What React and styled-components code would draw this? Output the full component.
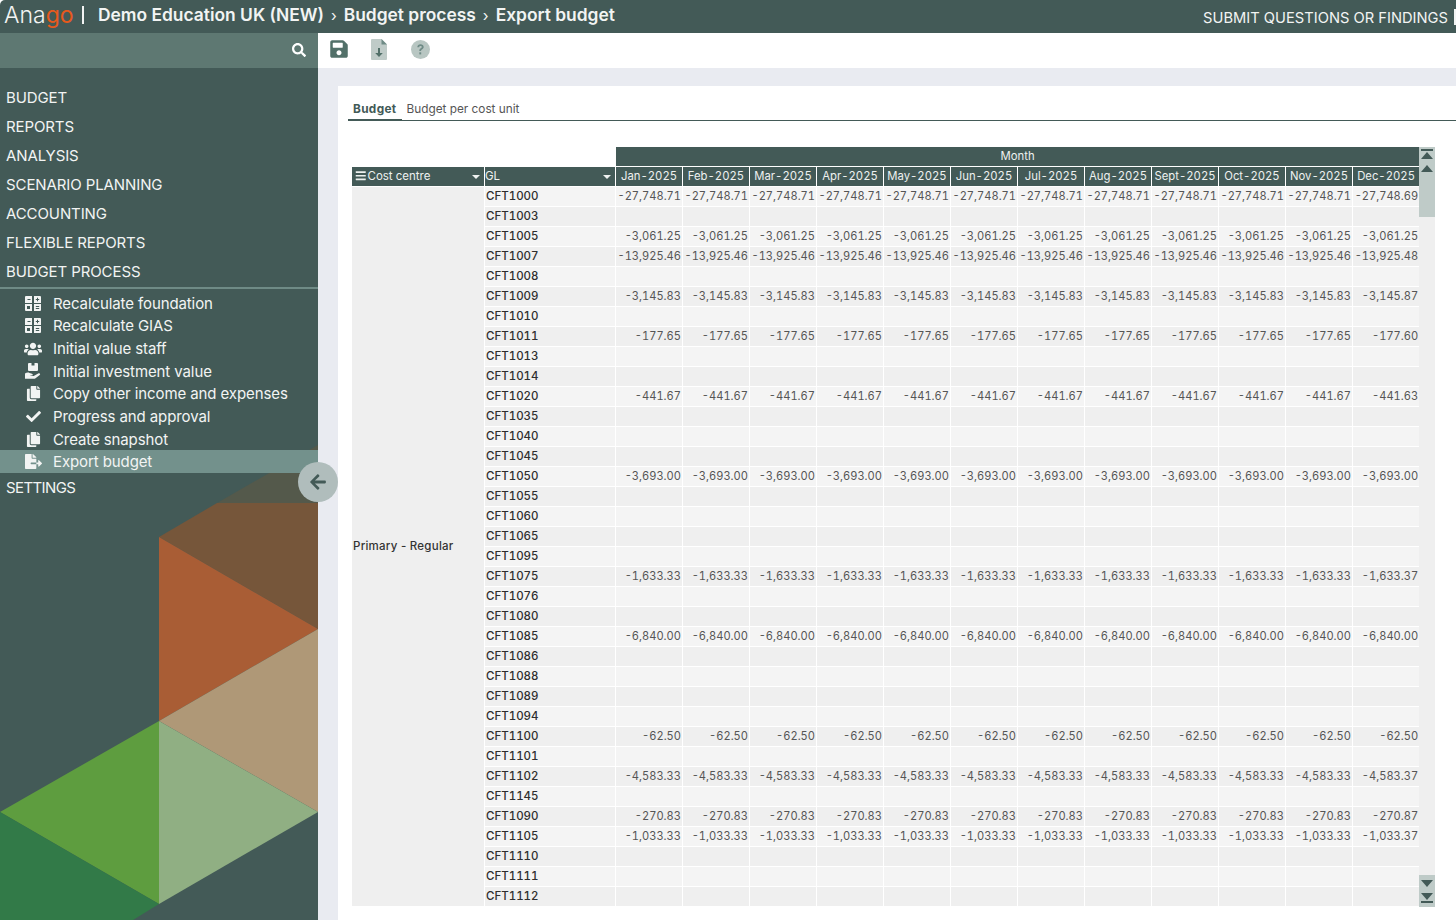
import React from 'react'
import styled, { createGlobalStyle } from 'styled-components'
import { FaSearch, FaSave, FaUsers, FaCopy, FaCheck, FaFileExport, FaArrowLeft, FaBars } from 'react-icons/fa'

const GlobalStyle = createGlobalStyle`
  html, body {
    margin: 0;
    padding: 0;
    height: 100%;
    overflow: hidden;
    background: #fff;
    font-family: 'Inter', 'Liberation Sans', sans-serif;
  }
`

const Page = styled.div`
  width: 1456px;
  height: 920px;
  display: flex;
  flex-direction: column;
  overflow: hidden;
`

const Header = styled.header`
  height: 33px;
  flex: none;
  display: flex;
  align-items: center;
  background: #435a57;
  color: #f2f4f3;
  padding-left: 4px;
  white-space: nowrap;
  border-top-left-radius: 5px;
`

const Logo = styled.span`
  font-size: 23px;
  font-weight: 300;
  width: 71px;
  padding-bottom: 4px;
`

const LogoAccent = styled.span`
  color: #e8591c;
  font-weight: 400;
`

const LogoBar = styled.span`
  width: 2px;
  height: 18px;
  background: #f2f4f3;
  margin: 0 14px 3px 7px;
`

const Crumb = styled.span`
  font-size: 17.4px;
  font-weight: 600;
  padding-bottom: 4px;
`

const CrumbSep = styled.span`
  font-size: 15px;
  margin: 0 7px;
  padding-bottom: 3px;
`

const Submit = styled.span`
  margin-left: auto;
  padding-top: 2px;
  font-size: 14.7px;
  font-weight: 400;
`

const SubmitBar = styled.span`
  width: 2px;
  height: 16px;
  margin-left: 6px;
  background: #f2f4f3;
`

const Body = styled.div`
  flex: 1;
  display: flex;
  min-height: 0;
`

const Sidebar = styled.aside`
  width: 318px;
  flex: none;
  position: relative;
  background: #435a57;
  color: #f2f4f3;
`

const Backdrop = styled.svg`
  position: absolute;
  left: 0;
  top: 0;
  width: 318px;
  height: 887px;
`

const SidebarContent = styled.div`
  position: relative;
`

const SearchRow = styled.div`
  height: 35px;
  display: flex;
  align-items: center;
  justify-content: flex-end;
  padding: 0 12px 2px 0;
  box-sizing: border-box;
  background: #5e7872;
  font-size: 14px;
  color: #fff;
`

const Menu = styled.nav`
  padding-top: 15px;
`

const MenuItem = styled.div`
  height: 29px;
  line-height: 29px;
  padding-left: 6px;
  font-size: 15px;
  letter-spacing: -0.1px;
`

const SettingsItem = styled(MenuItem)`
  letter-spacing: -0.6px;
`

const SubMenu = styled.div`
  border-top: 2px solid #6f8b86;
  margin-top: 1px;
  padding-top: 3px;
`

const SubItem = styled.div`
  height: 22.65px;
  display: flex;
  align-items: center;
  font-size: 15px;
  letter-spacing: -0.1px;
  background: ${(props) => (props.$active ? '#73918c' : 'transparent')};
`

const SubIcon = styled.span`
  width: 53px;
  flex: none;
  display: flex;
  align-items: center;
  justify-content: center;
  padding: 0 11px 0 24px;
  box-sizing: border-box;
  font-size: 15px;
`

const Collapse = styled.button`
  position: absolute;
  right: -20px;
  top: 429px;
  width: 40px;
  height: 40px;
  padding: 0;
  border: none;
  border-radius: 50%;
  background: #b0bdbc;
  color: #435a57;
  font-size: 18px;
  display: flex;
  align-items: center;
  justify-content: center;
`

const Main = styled.main`
  flex: 1;
  display: flex;
  flex-direction: column;
  min-width: 0;
  background: #e9ebf1;
`

const Toolbar = styled.div`
  height: 35px;
  flex: none;
  display: flex;
  align-items: center;
  background: #fff;
  padding-left: 11px;
`

const ToolButton = styled.span`
  width: 41px;
  height: 24px;
  margin-top: -3px;
  display: flex;
  align-items: center;
  font-size: 20px;
  color: #527069;
`

const FileButton = styled(ToolButton)`
  padding-left: 1px;
  width: 40px;
`

const Card = styled.section`
  flex: 1;
  margin-top: 18px;
  margin-left: 20px;
  background: #fff;
  padding: 13px 0 0 10px;
  min-height: 0;
`

const Tabs = styled.div`
  display: flex;
  align-items: stretch;
  height: 21px;
  border-bottom: 1px solid #435a57;
  font-size: 11.8px;
`

const Tab = styled.span`
  padding: 3px 5px 0;
  line-height: 14px;
  color: ${(props) => (props.$active ? '#435a57' : '#555')};
  font-weight: ${(props) => (props.$active ? 700 : 400)};
  letter-spacing: ${(props) => (props.$active ? '0.35px' : '0')};
  box-shadow: ${(props) => (props.$active ? 'inset 0 -2px 0 #435a57' : 'none')};
  margin-bottom: -1px;
`

const GridArea = styled.div`
  display: flex;
  margin: 26px 0 0 4px;
  height: 760px;
  overflow: hidden;
`

const TableClip = styled.div`
  width: 1067px;
  flex: none;
  overflow: hidden;
`

const Table = styled.table`
  width: 1068px;
  table-layout: fixed;
  border-collapse: separate;
  border-spacing: 0;
  font-size: 11.5px;
  font-variant-numeric: tabular-nums;
`

const HeadCell = styled.th`
  height: 18px;
  padding: 0 0 1px;
  border-right: 1px solid #fff;
  border-bottom: 1px solid #fff;
  background: ${(props) => (props.$blank ? '#fff' : '#435a57')};
  color: #eef1f0;
  font-weight: 400;
  font-size: 11.3px;
  text-align: center;
`

const FieldCell = styled(HeadCell)`
  text-align: left;
  position: relative;
  font-size: 11.5px;
`

const FieldInner = styled.span`
  display: flex;
  align-items: center;
  gap: 1px;
  padding-left: ${(props) => props.$indent || 0}px;
`

const Caret = styled.span`
  position: absolute;
  right: 4px;
  top: 8px;
  width: 0;
  height: 0;
  border-left: 4px solid transparent;
  border-right: 4px solid transparent;
  border-top: 4px solid #eef1f0;
`

const Cell = styled.td`
  height: 18px;
  padding: 0 1px 1px 0;
  border-right: 1px solid #fff;
  border-bottom: 1px solid #fff;
  background: ${(props) => (props.$odd ? '#efefef' : '#f4f4f4')};
  color: #555;
  font-size: 11.1px;
  text-align: right;
  white-space: nowrap;
  overflow: hidden;
`

const CodeCell = styled(Cell)`
  text-align: left;
  color: #2e2e2e;
  font-size: 11.5px;
  font-weight: 500;
  padding-left: 1px;
`

const CostCell = styled(Cell)`
  text-align: left;
  background: #efefef;
  color: #333;
  font-size: 11.5px;
  font-weight: 500;
  font-variant-numeric: normal;
  padding-left: 1px;
  letter-spacing: 0.25px;
`

const Scroller = styled.div`
  width: 16px;
  flex: none;
  display: flex;
  flex-direction: column;
  justify-content: space-between;
  background: #efefef;
`

const ScrollThumb = styled.div`
  height: ${(props) => props.$height}px;
  background: #bfcbc8;
  display: flex;
  flex-direction: column;
  align-items: center;
  padding-top: ${(props) => props.$pad}px;
  box-sizing: border-box;
`

const months = ['Jan-2025', 'Feb-2025', 'Mar-2025', 'Apr-2025', 'May-2025', 'Jun-2025', 'Jul-2025', 'Aug-2025', 'Sept-2025', 'Oct-2025', 'Nov-2025', 'Dec-2025']

const rows = [
  ['CFT1000', '-27,748.71', '-27,748.69'],
  ['CFT1003'],
  ['CFT1005', '-3,061.25', '-3,061.25'],
  ['CFT1007', '-13,925.46', '-13,925.48'],
  ['CFT1008'],
  ['CFT1009', '-3,145.83', '-3,145.87'],
  ['CFT1010'],
  ['CFT1011', '-177.65', '-177.60'],
  ['CFT1013'],
  ['CFT1014'],
  ['CFT1020', '-441.67', '-441.63'],
  ['CFT1035'],
  ['CFT1040'],
  ['CFT1045'],
  ['CFT1050', '-3,693.00', '-3,693.00'],
  ['CFT1055'],
  ['CFT1060'],
  ['CFT1065'],
  ['CFT1095'],
  ['CFT1075', '-1,633.33', '-1,633.37'],
  ['CFT1076'],
  ['CFT1080'],
  ['CFT1085', '-6,840.00', '-6,840.00'],
  ['CFT1086'],
  ['CFT1088'],
  ['CFT1089'],
  ['CFT1094'],
  ['CFT1100', '-62.50', '-62.50'],
  ['CFT1101'],
  ['CFT1102', '-4,583.33', '-4,583.37'],
  ['CFT1145'],
  ['CFT1090', '-270.83', '-270.87'],
  ['CFT1105', '-1,033.33', '-1,033.37'],
  ['CFT1110'],
  ['CFT1111'],
  ['CFT1112'],
]

const CalcIcon = () => (
  <svg width="16" height="15" viewBox="0 0 16 15" fill="currentColor">
    <path
      fillRule="evenodd"
      d="M1 0h6v7H0V1a1 1 0 0 1 1-1zm1.500 3v1h3V3zM9 0h6a1 1 0 0 1 1 1v6H9zm1.800 3v1h1.200v1.200h1V4h1.200V3H13V1.800h-1V3zM0 8h7v7H1a1 1 0 0 1-1-1zm2 2v3h3v-3zM9 8h7v6a1 1 0 0 1-1 1H9zm1.800 2v1h3.400v-1zm0 2v1h3.400v-1z"
    />
  </svg>
)

const HandBoxIcon = () => (
  <svg width="17" height="16" viewBox="0 0 17 16" fill="currentColor">
    <path d="M4 0h2.500v2.500h3V0H12a1 1 0 0 1 1 1v6a1 1 0 0 1-1 1H4a1 1 0 0 1-1-1V1a1 1 0 0 1 1-1z" />
    <path d="M0 10.500c1.500-1 3-1.200 4.500-.6l2.500.8c1 .3 1.200 1.600 0 1.700H5.500v.6h3.200l4.500-2.600c1.500-.8 2.600.7 1.500 1.600l-4.500 3.400c-.4.300-.8.400-1.300.4H0z" />
  </svg>
)

const FileDownIcon = () => (
  <svg width="16" height="21" viewBox="0 0 16 21">
    <path fill="#bfcbc8" d="M1 0h9.500L16 5.500V20a1 1 0 0 1-1 1H1a1 1 0 0 1-1-1V1a1 1 0 0 1 1-1z" />
    <path fill="#6f8b86" d="M10.500 0v5.500H16z" />
    <path fill="#527069" d="M7 9h2v5h2.800L8 18l-3.800-4H7z" />
  </svg>
)

const HelpIcon = () => (
  <svg width="19" height="19" viewBox="0 0 19 19">
    <circle cx="9.500" cy="9.500" r="9.500" fill="#b8c6c2" />
    <path d="M6.300 7.200c0-1.900 1.500-2.900 3.200-2.900s3.200 1 3.200 2.700c0 2.200-2.600 2.200-2.600 3.900H8.300c0-2.700 2.500-2.600 2.500-3.900 0-.6-.6-1-1.300-1-.8 0-1.300.5-1.300 1.200z" fill="#6f8b86" />
    <rect x="8.300" y="12.300" width="1.900" height="2.100" fill="#6f8b86" />
  </svg>
)

const sideItems = [
  { label: 'Recalculate foundation', icon: <CalcIcon /> },
  { label: 'Recalculate GIAS', icon: <CalcIcon /> },
  { label: 'Initial value staff', icon: <FaUsers size={18} /> },
  { label: 'Initial investment value', icon: <HandBoxIcon /> },
  { label: 'Copy other income and expenses', icon: <FaCopy /> },
  { label: 'Progress and approval', icon: <FaCheck /> },
  { label: 'Create snapshot', icon: <FaCopy /> },
  { label: 'Export budget', icon: <FaFileExport size={17} />, active: true },
]

const ScrollArrow = ({ dir, stop }) => (
  <svg width="14" height="13" viewBox="0 0 14 13" fill="#435a57">
    {dir === 'up' ? (
      <>
        {stop && <rect x="1" y="0" width="12" height="2" />}
        <path d="M7 3l6 7H1z" />
      </>
    ) : (
      <>
        <path d="M1 1h12l-6 7z" />
        {stop && <rect x="1" y="9" width="12" height="2" />}
      </>
    )}
  </svg>
)

export default function App() {
  return (
    <Page>
      <GlobalStyle />
      <Header>
        <Logo>
          Ana<LogoAccent>go</LogoAccent>
        </Logo>
        <LogoBar />
        <Crumb>Demo Education UK (NEW)</Crumb>
        <CrumbSep>›</CrumbSep>
        <Crumb>Budget process</Crumb>
        <CrumbSep>›</CrumbSep>
        <Crumb>Export budget</Crumb>
        <Submit>SUBMIT QUESTIONS OR FINDINGS</Submit>
        <SubmitBar />
      </Header>
      <Body>
        <Sidebar>
          <Backdrop viewBox="0 33 318 887">
            <polygon points="318,445 217,503 318,503" fill="#54594b" />
            <polygon points="159,537 217,503 318,503 318,629" fill="#76563a" />
            <polygon points="159,537 318,629 159,721" fill="#a95d35" />
            <polygon points="318,629 318,812 159,721" fill="#af9877" />
            <polygon points="159,721 159,904 0,812" fill="#5e9d3f" />
            <polygon points="159,721 318,812 159,904" fill="#90af83" />
            <polygon points="0,812 159,904 133,920 0,920" fill="#327a48" />
          </Backdrop>
          <SidebarContent>
            <SearchRow>
              <FaSearch />
            </SearchRow>
            <Menu>
              <MenuItem>BUDGET</MenuItem>
              <MenuItem>REPORTS</MenuItem>
              <MenuItem>ANALYSIS</MenuItem>
              <MenuItem>SCENARIO PLANNING</MenuItem>
              <MenuItem>ACCOUNTING</MenuItem>
              <MenuItem>FLEXIBLE REPORTS</MenuItem>
              <MenuItem>BUDGET PROCESS</MenuItem>
              <SubMenu>
                {sideItems.map((item) => (
                  <SubItem key={item.label} $active={item.active}>
                    <SubIcon>{item.icon}</SubIcon>
                    {item.label}
                  </SubItem>
                ))}
              </SubMenu>
              <SettingsItem>SETTINGS</SettingsItem>
            </Menu>
          </SidebarContent>
          <Collapse aria-label="Collapse">
            <FaArrowLeft />
          </Collapse>
        </Sidebar>
        <Main>
          <Toolbar>
            <ToolButton>
              <FaSave />
            </ToolButton>
            <FileButton>
              <FileDownIcon />
            </FileButton>
            <ToolButton>
              <HelpIcon />
            </ToolButton>
          </Toolbar>
          <Card>
            <Tabs>
              <Tab $active>Budget</Tab>
              <Tab>Budget per cost unit</Tab>
            </Tabs>
            <GridArea>
              <TableClip>
                <Table>
                  <colgroup>
                    <col width="133" />
                    <col width="131" />
                    {months.map((m) => (
                      <col key={m} width="67" />
                    ))}
                  </colgroup>
                  <thead>
                    <tr>
                      <HeadCell $blank colSpan={2} />
                      <HeadCell colSpan={12}>Month</HeadCell>
                    </tr>
                    <tr>
                      <FieldCell>
                        <FieldInner $indent={3}>
                          <FaBars />
                          Cost centre
                        </FieldInner>
                        <Caret />
                      </FieldCell>
                      <FieldCell>
                        GL
                        <Caret />
                      </FieldCell>
                      {months.map((m) => (
                        <HeadCell key={m}>{m}</HeadCell>
                      ))}
                    </tr>
                  </thead>
                  <tbody>
                    {rows.map(([code, value, last], i) => (
                      <tr key={code}>
                        {i === 0 && <CostCell rowSpan={rows.length}>Primary - Regular</CostCell>}
                        <CodeCell $odd={i % 2 === 1}>{code}</CodeCell>
                        {months.map((m, j) => (
                          <Cell key={m} $odd={i % 2 === 1}>
                            {j === 11 ? last : value}
                          </Cell>
                        ))}
                      </tr>
                    ))}
                  </tbody>
                </Table>
              </TableClip>
              <Scroller>
                <ScrollThumb $height={70} $pad={2}>
                  <ScrollArrow dir="up" stop />
                  <ScrollArrow dir="up" />
                </ScrollThumb>
                <ScrollThumb $height={32} $pad={4}>
                  <ScrollArrow dir="down" />
                  <ScrollArrow dir="down" stop />
                </ScrollThumb>
              </Scroller>
            </GridArea>
          </Card>
        </Main>
      </Body>
    </Page>
  )
}
